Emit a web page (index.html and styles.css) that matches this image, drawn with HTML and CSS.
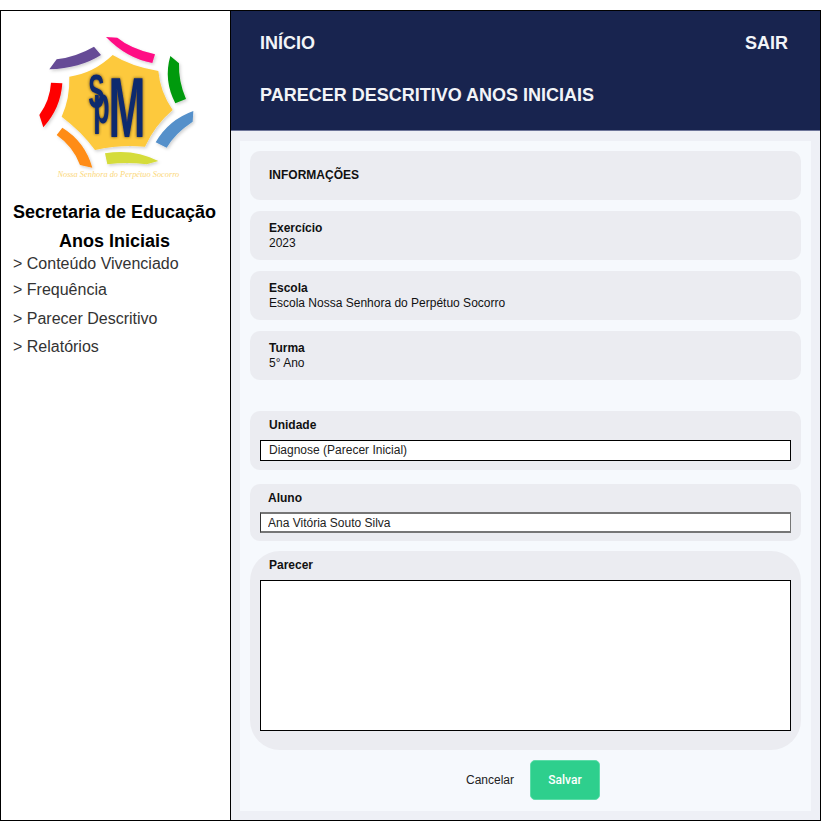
FILE: index.html
```html
<!DOCTYPE html>
<html lang="pt-BR">
<head>
    <meta charset="UTF-8">
    <meta name="viewport" content="width=device-width, initial-scale=1.0">
    <title>Parecer Descritivo</title>
    <link rel="stylesheet" href="styles.css">
</head>
<body>
    <div class="page">
        <aside class="sidebar">
            <svg class="logo" width="170" height="160" viewBox="0 0 510 480">
                <defs>
                    <filter id="soft" x="-20%" y="-20%" width="140%" height="140%">
                        <feDropShadow dx="4" dy="5" stdDeviation="4" flood-color="#000" flood-opacity="0.18"/>
                    </filter>
                    <filter id="glow" x="-20%" y="-20%" width="140%" height="140%">
                        <feDropShadow dx="0" dy="0" stdDeviation="5" flood-color="#3a2a00" flood-opacity="0.85"/>
                    </filter>
                </defs>
                <g filter="url(#soft)">
                    <path fill="#ff0a84" d="M228 36 L262 38 Q300 70 375 88 L367 114 Q290 100 228 36Z"/>
                    <path fill="#664b96" d="M58 133 L80 103 Q140 95 192 65 L213 90 Q150 130 58 133Z"/>
                    <path fill="#009a0c" d="M421 93 L447 115 Q445 170 468 222 L436 235 Q400 165 421 93Z"/>
                    <path fill="#5490ca" d="M490 258 L488 290 Q435 325 410 368 L377 352 Q415 285 490 258Z"/>
                    <path fill="#d5dc3a" d="M225 385 Q310 370 385 408 L350 418 Q290 410 232 418Z"/>
                    <path fill="#ff8c13" d="M97 308 Q165 350 187 428 L150 420 Q130 365 80 330Z"/>
                    <path fill="#ff0000" d="M63 173 L97 175 Q92 250 40 307 L28 270 Q60 225 63 173Z"/>
                    <path fill="#fdc93c" d="M248 90 Q305 125 385 138 Q390 200 428 255 Q375 300 345 365 Q270 358 195 375 Q155 320 95 275 Q120 220 118 155 Q190 145 248 90Z"/>
                </g>
                <g filter="url(#glow)">
                    <text class="logo-letters" transform="scale(0.7 1.35)"><tspan x="250" y="185" font-size="105">S</tspan><tspan x="271" y="218" font-size="115">p</tspan><tspan x="336" y="248" font-size="190">M</tspan></text>
                </g>
                <text class="logo-motto" x="265" y="456" text-anchor="middle">Nossa Senhora do Perpétuo Socorro</text>
            </svg>
            <h2 class="side-title">Secretaria de Educação</h2>
            <h2 class="side-title">Anos Iniciais</h2>
            <nav class="side-menu">
                <a href="#">&gt; Conteúdo Vivenciado</a>
                <a href="#">&gt; Frequência</a>
                <a href="#">&gt; Parecer Descritivo</a>
                <a href="#">&gt; Relatórios</a>
            </nav>
        </aside>
        <main class="main">
            <header class="topbar">
                <div class="topbar-row">
                    <a href="#">INÍCIO</a>
                    <a href="#">SAIR</a>
                </div>
                <h1>PARECER DESCRITIVO ANOS INICIAIS</h1>
            </header>
            <div class="content">
                <div class="panel">
                    <section class="card card-title">INFORMAÇÕES</section>
                    <section class="card card-info">
                        <b>Exercício</b>
                        <span>2023</span>
                    </section>
                    <section class="card card-info">
                        <b>Escola</b>
                        <span>Escola Nossa Senhora do Perpétuo Socorro</span>
                    </section>
                    <section class="card card-info card-last">
                        <b>Turma</b>
                        <span>5° Ano</span>
                    </section>
                    <section class="card card-field card-unit">
                        <label>Unidade</label>
                        <input type="text" value="Diagnose (Parecer Inicial)">
                    </section>
                    <section class="card card-field card-student">
                        <label>Aluno</label>
                        <input type="text" value="Ana Vitória Souto Silva">
                    </section>
                    <section class="card card-field card-text">
                        <label>Parecer</label>
                        <textarea></textarea>
                    </section>
                    <div class="actions">
                        <a class="btn-cancel" href="#">Cancelar</a>
                        <button class="btn-save" type="button">Salvar</button>
                    </div>
                </div>
            </div>
        </main>
    </div>
</body>
</html>
```

FILE: styles.css
```css
* {
    margin: 0;
    padding: 0;
    box-sizing: border-box;
}
html, body {
    background: #fff;
    overflow: hidden;
}
body {
    padding-top: 10px;
    font-family: "Liberation Sans", sans-serif;
    color: #000;
}
a {
    text-decoration: none;
    color: inherit;
}
.page {
    display: flex;
    width: 821px;
    height: 811px;
    border: 1px solid #000;
}

/* coluna da esquerda */
.sidebar {
    width: 230px;
    flex: none;
    border-right: 1px solid #000;
}
.logo {
    display: block;
    margin: 14px 0 0 29px;
}
.logo-letters {
    font-family: "Liberation Sans", sans-serif;
    font-weight: bold;
    fill: #0b2a6e;
}
.logo-motto {
    font-family: "Liberation Serif", serif;
    font-style: italic;
    font-size: 25px;
    fill: #fbd77a;
}
.side-title {
    padding-right: 2px;
    font-size: 18px;
    font-weight: bold;
    line-height: 29px;
    text-align: center;
}
.side-title:first-of-type {
    margin-top: 13px;
}
.side-menu {
    display: flex;
    flex-direction: column;
    margin-top: -2px;
    padding-left: 12px;
    font-size: 16px;
    color: #333;
}
.side-menu a {
    height: 28px;
    line-height: 20px;
}
.side-menu a:first-child {
    height: 26px;
}
.side-menu a:nth-child(2) {
    height: 29px;
}

/* topo */
.main {
    flex: 1;
    display: flex;
    flex-direction: column;
    background: #eef0f6;
}
.topbar {
    height: 120px;
    flex: none;
    padding: 20px 32px 0 29px;
    background: #18244f;
    border-bottom: 1px solid #6d7599;
    color: #f2f4f8;
    font-size: 18px;
    font-weight: bold;
    line-height: 24px;
}
.topbar-row {
    display: flex;
    justify-content: space-between;
}
.topbar h1 {
    margin-top: 28px;
    font-size: 18px;
    line-height: 24px;
}

/* conteudo */
.content {
    flex: 1;
    padding: 10px 9px 9px 9px;
}
.panel {
    height: 100%;
    padding: 10px 10px 0;
    background: #f6f9fd;
}
.card {
    margin-bottom: 11px;
    background: #ebecf1;
    border-radius: 10px;
    font-size: 12px;
    color: #111;
}
.card-title {
    height: 49px;
    padding-left: 19px;
    font-weight: bold;
    line-height: 48px;
}
.card-info {
    display: flex;
    flex-direction: column;
    height: 49px;
    padding: 10px 19px 0;
    line-height: 15px;
}
.card-info b {
    font-weight: bold;
}
.card-last {
    margin-bottom: 31px;
}
.card-field {
    padding: 0 10px;
}
.card-field label {
    display: block;
    height: 29px;
    padding-left: 9px;
    font-weight: bold;
    line-height: 29px;
}
.card-field input,
.card-field textarea {
    display: block;
    width: 100%;
    background: #fff;
    border: 1px solid #000;
    outline: none;
    font-family: inherit;
    font-size: 12px;
    color: #222;
}
.card-field input {
    height: 21px;
    padding: 0 0 2px 8px;
}
.card-unit {
    height: 59px;
    margin-bottom: 14px;
}
.card-student {
    height: 57px;
    margin-bottom: 10px;
}
.card-student label {
    height: 28px;
    padding-left: 8px;
}
.card-student input {
    height: 21px;
    padding: 0 0 0 7px;
    border-width: 2px 1px 2px 1px;
    border-color: #767676;
    border-left-color: #333;
}
.card-text {
    height: 199px;
    margin-bottom: 10px;
    border-radius: 30px;
}
.card-text textarea {
    height: 151px;
    resize: none;
}
.actions {
    display: flex;
    justify-content: center;
    align-items: center;
    gap: 16px;
    margin-left: 15px;
}
.btn-cancel {
    font-size: 12px;
    color: #222;
}
.btn-save {
    width: 70px;
    height: 40px;
    background: #2ecf8d;
    border: 1px solid #5cdca8;
    border-radius: 5px;
    color: #fff;
    font-family: Roboto, sans-serif;
    font-size: 12px;
    font-weight: 500;
}
```
